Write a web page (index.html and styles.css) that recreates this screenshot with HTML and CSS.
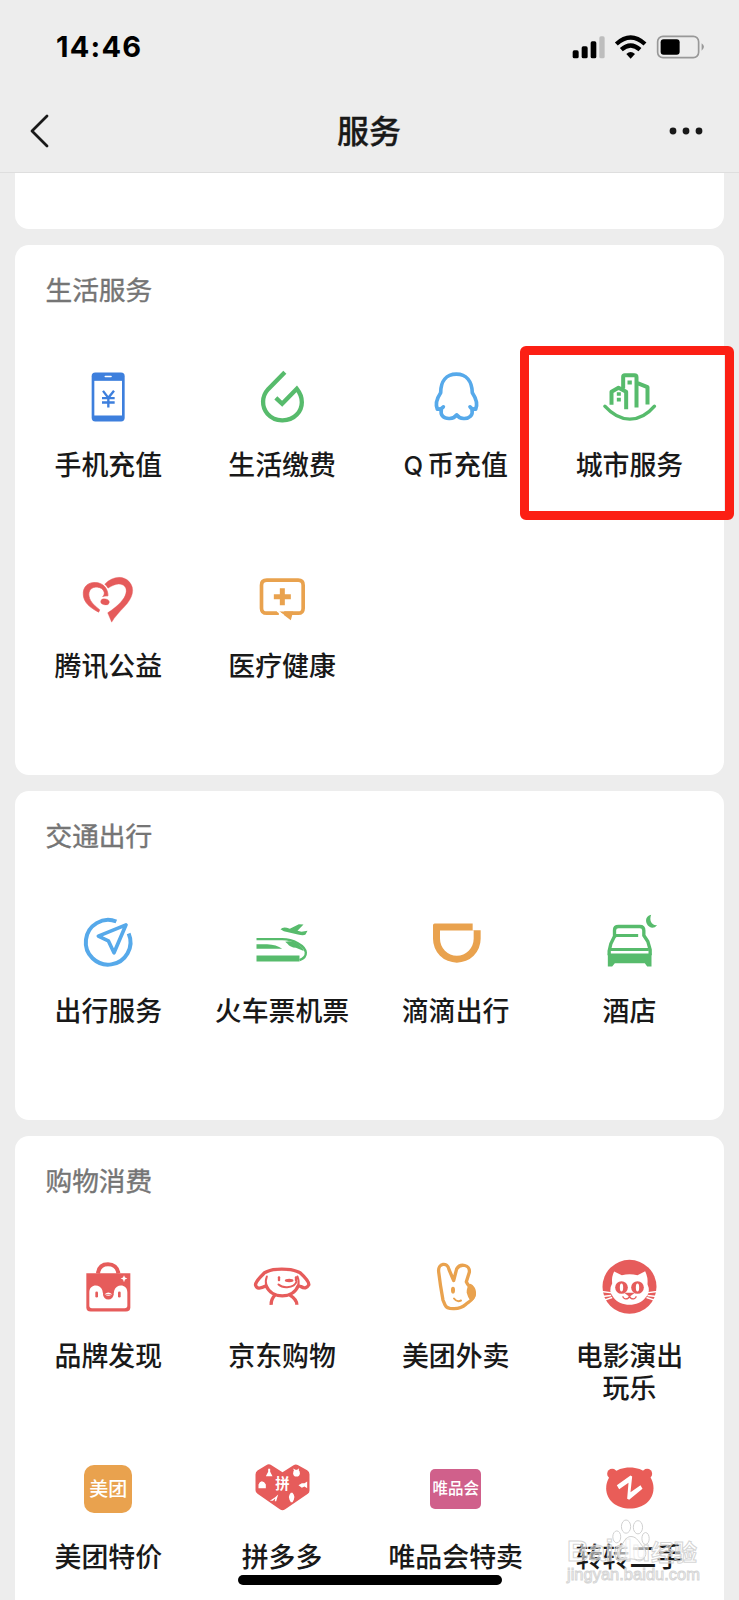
FILE: index.html
```html
<!DOCTYPE html>
<html lang="zh-CN">
<head>
<meta charset="utf-8">
<title>服务</title>
<link rel="stylesheet" href="styles.css">
</head>
<body>
<div class="screen">
  <header class="header">
    <div class="status">
      <span class="time">14:46</span>
      <svg class="status-icons" viewBox="0 0 400 72">
        <g fill="#000"><rect x="2" y="46" width="18" height="24" rx="5"/><rect x="29" y="34" width="18" height="36" rx="5"/><rect x="56" y="19" width="17" height="51" rx="5"/><rect x="82" y="4" width="16" height="66" rx="5" fill="#bdbdbd"/></g>
        <g fill="none" stroke="#000" stroke-width="13"><path d="M133 27Q176-12 219 27M148 44Q176 19 204 44"/></g>
        <path d="M163 57q13-12 26 0l-13 14z"/>
        <rect x="257" y="4" width="123" height="64" rx="16" fill="none" stroke="#989898" stroke-width="5"/>
        <rect x="266" y="13" width="57" height="46" rx="9"/>
        <path d="M389 25q14 10 0 22z" fill="#989898"/>
      </svg>
    </div>
    <div class="nav">
      <svg class="back" viewBox="0 0 20 34"><path d="M18 2L3 17l15 15" fill="none" stroke="#191919" stroke-width="2.8" stroke-linecap="round" stroke-linejoin="round"/></svg>
      <h1 class="nav-title">服务</h1>
      <svg class="more" viewBox="0 0 34 8"><g fill="#191919"><circle cx="4" cy="4" r="3.4"/><circle cx="17" cy="4" r="3.4"/><circle cx="30" cy="4" r="3.4"/></g></svg>
    </div>
  </header>

  <main class="content">
    <section class="card card-cut"></section>

    <section class="card card-life">
      <h2 class="card-title">生活服务</h2>
      <div class="grid">
        <div class="item">
          <svg class="icon" viewBox="116 49.5 180 180"><rect x="157" y="66" width="99" height="147" rx="11" fill="#3d7fdd"/><path d="M165 91h83v104h-83z" fill="#fff"/><path d="M198 78h17" stroke="#fff" stroke-width="5" stroke-linecap="round"/><path d="M191 121l16 21 17-21M207 142v29M188 143h38M188 156h38" fill="none" stroke="#3d7fdd" stroke-width="7"/></svg>
          <span class="label">手机充值</span>
        </div>
        <div class="item">
          <svg class="icon" viewBox="636.5 49.5 180 180"><path d="M735 65L685 116C665 138 665 169 683 190C705 215 748 216 771 192C791 171 791 140 771 115L727 160L708 142" fill="none" stroke="#57bb6c" stroke-width="13"/></svg>
          <span class="label">生活缴费</span>
        </div>
        <div class="item">
          <svg class="icon" viewBox="78 94.5 180 180"><path d="M130 214Q124 222 112 221Q103 201 122 172C122 137 139 116 169 116C199 116 216 137 217 172Q236 201 227 221Q215 222 210 214M124 221C120 240 131 250 149 249Q163 248 170 238Q177 248 191 249C208 250 220 240 216 221" fill="none" stroke="#56a9ea" stroke-width="11" stroke-linecap="round" stroke-linejoin="round"/></svg>
          <span class="label"><span class="latin">Q</span>币充值</span>
        </div>
        <div class="item">
          <svg class="icon" viewBox="598.5 94.5 180 180"><g fill="none" stroke="#57bb6c" stroke-width="12" stroke-linejoin="round"><path d="M636 208V169L657 157L680 169V221M671 159V124Q671 119 676 119H705Q711 119 711 125V216M714 143L744 155V207"/><path d="M616 212Q651 251 691 251Q732 251 765 212" stroke-width="10" stroke-linecap="round"/></g><path d="M684 135h13v12h-13zM652 170h12v11h-12zM652 187h12v11h-12z" fill="#57bb6c"/></svg>
          <span class="label">城市服务</span>
        </div>
        <div class="item">
          <svg class="icon" viewBox="116 22.5 180 180"><g fill="#e55b5b" stroke="#e55b5b" stroke-linejoin="round"><path d="M196 71C220 46 253 44 270 64C288 85 281 112 255 139C239 156 226 170 217 185Q210 169 205 157C218 148 241 133 254 112C265 93 262 79 249 73C234 66 217 77 206 83Q202 75 196 71z"/><path stroke-width="2" d="M178 155C153 142 133 126 132 103C130 80 145 65 168 66C192 67 206 84 206 106Q196 106 190 108C201 100 193 82 175 80C157 78 146 90 149 107C152 125 168 137 181 148z"/><ellipse cx="197" cy="124" rx="13" ry="9" transform="rotate(12 197 124)"/></g></svg>
          <span class="label">腾讯公益</span>
        </div>
        <div class="item">
          <svg class="icon" viewBox="636.5 22.5 180 180"><path d="M717 158H681Q665 158 665 143V74Q665 59 681 59H775Q790 59 790 74V143Q790 158 775 158H733" fill="none" stroke="#e9a24e" stroke-width="11"/><path d="M718 153L753 179L760 153zM720 83h15v18h18v15h-18v18h-15v-18h-18v-15h18z" fill="#e9a24e"/><path d="M712 151l19 14" stroke="#fff" stroke-width="5"/></svg>
          <span class="label">医疗健康</span>
        </div>
      </div>
    </section>

    <section class="card card-travel">
      <h2 class="card-title">交通出行</h2>
      <div class="grid">
        <div class="item">
          <svg class="icon" viewBox="116 37.5 180 180"><g fill="none" stroke="#56a9ea" stroke-width="12"><path d="M231 63A67 67 0 1 0 268 99"/><path d="M260 73L177 107L207 121L224 157Z" stroke-width="11" stroke-linejoin="round"/></g></svg>
          <span class="label">出行服务</span>
        </div>
        <div class="item">
          <svg class="icon" viewBox="636.5 37.5 180 180"><g fill="#57bb6c"><path d="M650 165H779V183H650zM650 131H682Q710 132 727 145H650zM722 86Q729 79 741 82L750 85L777 71L791 72L773 91L785 94L803 91L797 102Q791 107 774 102L732 92z"/><path d="M736 124C748 121 762 122 776 132C788 141 795 151 790 151L768 142Q751 141 743 130z"/></g><path d="M650 116H727C760 116 796 135 798 156Q799 172 779 179" fill="none" stroke="#57bb6c" stroke-width="7"/></svg>
          <span class="label">火车票机票</span>
        </div>
        <div class="item">
          <svg class="icon" viewBox="108 37.5 180 180"><path d="M134 69H248V89H272V115A71 71 0 0 1 129 115V74Q129 69 134 69zM150 90V115A50 50 0 0 0 251 115V90z" fill="#e9a24e" fill-rule="evenodd"/></svg>
          <span class="label">滴滴出行</span>
        </div>
        <div class="item">
          <svg class="icon" viewBox="628.5 37.5 180 180"><g fill="none" stroke="#57bb6c"><path d="M675 112V89Q675 78 687 78H751Q763 78 763 90V105L775 123L782 148V164M675 107L664 130L659 151V164" stroke-width="10"/><path d="M673 105H746" stroke-width="9"/><path d="M664 147H778" stroke-width="9"/></g><path d="M655 159H786V198H773L766 188H676L668 198H655zM785 43C765 47 766 70 780 79Q792 86 803 74C787 76 778 61 785 43z" fill="#57bb6c"/></svg>
          <span class="label">酒店</span>
        </div>
      </div>
    </section>

    <section class="card card-shop">
      <h2 class="card-title">购物消费</h2>
      <div class="grid">
        <div class="item">
          <svg class="icon" viewBox="116 40.5 180 180"><path d="M176 87C178 68 190 59 206 59S235 68 237 87" fill="none" stroke="#e65c5b" stroke-width="12"/><path d="M141 86H273V188Q273 201 260 201H154Q141 201 141 188z" fill="#e65c5b"/><path d="M150 143C150 117 183 117 189 137A18 18 0 0 0 225 137C231 117 264 117 264 143V184Q264 191 256 191H158Q150 191 150 184z" fill="#fff"/><g fill="#e65c5b"><rect x="168" y="141" width="8" height="18" rx="4"/><rect x="236" y="141" width="8" height="18" rx="4"/><circle cx="207" cy="149" r="16"/></g><path d="M196 149Q207 139 218 149Q207 158 196 149z" fill="#fff"/><path d="M198 150h18" stroke="#e65c5b" stroke-width="2"/><path d="M254 92l3 7 7 3-7 3-3 8-3-8-7-3 7-3z" fill="#fff"/></svg>
          <span class="label">品牌发现</span>
        </div>
        <div class="item">
          <svg class="icon" viewBox="636.5 40.5 180 180"><g fill="none" stroke="#e65c5b" stroke-width="10" stroke-linejoin="round" stroke-linecap="round"><path d="M675 84C687 80 687 74 726 74S767 80 780 84C791 94 808 110 807 121Q799 136 783 126L775 124C759 164 696 164 679 124Q651 139 647 121C647 110 664 95 675 84z"/><path d="M681 96Q675 111 680 124M773 96Q779 111 775 124" stroke-width="6"/><path d="M716 120Q726 129 742 128Q766 126 770 111" stroke-width="6"/></g><g fill="none" stroke="#e65c5b" stroke-width="10"><path d="M706 151Q693 164 694 181M749 151Q771 164 771 181"/></g><g fill="#e65c5b"><rect x="714" y="95" width="7" height="15" rx="3"/><rect x="765" y="95" width="7" height="15" rx="3"/><ellipse cx="748" cy="108" rx="13" ry="5"/></g></svg>
          <span class="label">京东购物</span>
        </div>
        <div class="item">
          <svg class="icon" viewBox="108 40.5 180 180"><path d="M240 118C251 120 260 136 258 149C256 164 247 169 241 169Q234 160 230 145Q230 125 240 118z" fill="#e9a24e"/><path d="M159 167C154 140 149 108 146 82C143 55 173 52 177 75L191 108L200 73C211 55 241 61 238 83L229 112C234 125 248 132 253 147C252 167 237 171 227 180C210 195 172 198 165 181Z" fill="none" stroke="#e9a24e" stroke-width="10" stroke-linejoin="round"/><ellipse cx="189" cy="137" rx="6" ry="10" fill="#e9a24e"/><path d="M192 162Q201 174 213 168" fill="none" stroke="#e9a24e" stroke-width="6" stroke-linecap="round"/></svg>
          <span class="label">美团外卖</span>
        </div>
        <div class="item">
          <svg class="icon" viewBox="628.5 39.5 180 180"><circle cx="720" cy="126" r="81" fill="#e65c5b"/><path d="M674 80L697 91Q720 86 744 91L767 79Q776 97 774 118Q785 141 768 158C747 187 693 187 672 158Q655 138 668 116Q665 97 674 80z" fill="#fff"/><path d="M636 140l32 4M638 155l27-3M644 166l24-8M803 140l-32 4M801 155l-27-3M795 166l-24-8" stroke="#fff" stroke-width="4"/><circle cx="696" cy="128" r="19" fill="#e65c5b"/><circle cx="744" cy="128" r="19" fill="#e65c5b"/><ellipse cx="696" cy="128" rx="5" ry="12" fill="#fff"/><ellipse cx="744" cy="128" rx="5" ry="12" fill="#fff"/><path d="M710 146h20l-10 7zM720 148v6q-3 9-13 8-7-2-7-8M720 154q3 9 13 8 7-2 7-8" fill="none" stroke="#e65c5b" stroke-width="4"/></svg>
          <span class="label">电影演出<br>玩乐</span>
        </div>
        <div class="item">
          <div class="icon badge-slot"><span class="badge badge-mt">美团</span></div>
          <span class="label">美团特价</span>
        </div>
        <div class="item">
          <svg class="icon" viewBox="636.5 28.5 180 180"><path d="M687 44Q691 44 695 47L728 68L761 47Q768 43 775 47L802 62Q809 66 809 74V123Q809 130 804 133L735 180Q728 185 721 180L653 133Q647 129 647 122V75Q647 67 653 63L679 47Q683 44 687 44z" fill="#e65c5b"/><text x="728" y="119" text-anchor="middle" class="pin-text">拼</text><g fill="#fff"><path d="M685 58h6v9l7 13h-20l7-13zM656 105q3-9 10-10 8 1 12 10v11h-22zM776 107l10-6h8l8-5v20l-8-5-8 4zM715 135l-6 20h-4l1-8-7 7h-9l16-11zM749 136l4-6h5l4 6q4 8 0 15l-4 7h-5l-4-7q-4-8 0-15z"/><circle cx="770" cy="71" r="10"/><path d="M760 57l10 5 8-6-2 9h-13z"/></g></svg>
          <span class="label">拼多多</span>
        </div>
        <div class="item">
          <div class="icon badge-slot"><span class="badge badge-vip">唯品会</span></div>
          <span class="label">唯品会特卖</span>
        </div>
        <div class="item">
          <svg class="icon" viewBox="688.5 28.5 180 180"><g fill="#e95d58"><circle cx="728" cy="73" r="15"/><circle cx="833" cy="73" r="15"/><path d="M781 54C824 54 852 81 852 116C852 152 821 177 781 177S710 152 710 116C710 81 738 54 781 54z"/></g><path d="M742 107L783 78L788 81L783 128L813 107L819 118L779 151L773 148L777 100L749 119z" fill="#fff"/></svg>
          <span class="label">转转二手</span>
        </div>
      </div>
    </section>
  </main>

  <div class="highlight"></div>
  <div class="watermark">
    <div class="wm-name"><span class="wm-latin">Baidu</span><span class="wm-cn">经验</span></div>
    <div class="wm-url">jingyan.baidu.com</div>
    <svg class="wm-paw" viewBox="0 0 114 130"><g fill="#fff" fill-opacity=".6" stroke="#d0d0d0" stroke-width="3"><ellipse cx="14" cy="54" rx="12" ry="18"/><ellipse cx="42" cy="23" rx="14" ry="20"/><ellipse cx="78" cy="25" rx="14" ry="20"/><ellipse cx="101" cy="59" rx="11" ry="18"/><path d="M57 53C39 53 37 72 24 83C5 100 17 126 37 123Q57 118 77 123C98 127 111 104 95 86C82 73 76 53 57 53z"/></g></svg>
  </div>
  <div class="home-bar"></div>
</div>
</body>
</html>
```
FILE: styles.css
```css
* { box-sizing: border-box; }

body {
  margin: 0;
  background: #ededed;
  font-family: "Noto Sans CJK SC", sans-serif;
}

.screen {
  position: relative;
  height: 1600px;
  overflow: hidden;
}

.header {
  height: 172.5px;
  border-bottom: 1px solid #dedede;
}

.status {
  display: flex;
  justify-content: space-between;
  align-items: center;
  height: 94px;
  padding: 0 34px 0 56px;
}

.time {
  font: 700 29px/32px Inter, sans-serif;
  letter-spacing: 1.2px;
  color: #000;
}

.status-icons {
  width: 133.3px;
  height: 24px;
}

.nav {
  display: flex;
  justify-content: space-between;
  align-items: center;
  height: 73px;
  padding: 0 36px 0 29px;
}

.back { width: 20px; height: 34px; }
.more { width: 34px; height: 8px; }

.nav-title {
  margin: -4px 0 0 20px;
  font-size: 32px;
  line-height: 40px;
  font-weight: 500;
  color: #191919;
  -webkit-text-stroke: 0.3px #191919;
}

.content {
  display: flex;
  flex-direction: column;
  gap: 15.5px;
  padding: 0 15px;
}

.card {
  flex: none;
  padding: 28px 6.5px 0;
  border-radius: 14px;
  background: #fff;
}

.card-cut {
  height: 56.5px;
  padding: 0;
  border-radius: 0 0 14px 14px;
}

.card-life { height: 530.5px; }
.card-travel { height: 329.5px; }
.card-shop { height: 480px; border-radius: 14px 14px 0 0; }

.card-title {
  margin: 0 0 62.2px 24px;
  font-size: 26.7px;
  line-height: 32px;
  font-weight: 400;
  color: #757575;
  -webkit-text-stroke: 0.4px #757575;
}

.grid {
  display: grid;
  grid-template-columns: repeat(4, 173.7px);
  grid-auto-rows: 201px;
}

.item {
  display: flex;
  flex-direction: column;
  align-items: center;
  gap: 21.5px;
}

.icon {
  flex: none;
  width: 60px;
  height: 60px;
}

.label {
  font-size: 26.9px;
  line-height: 32px;
  font-weight: 500;
  text-align: center;
  white-space: nowrap;
  color: #191919;
}

.latin {
  margin-right: 4px;
  font-family: Inter, sans-serif;
  font-size: 25.5px;
}

.badge-slot {
  display: flex;
  align-items: center;
  justify-content: center;
}

.badge {
  display: flex;
  align-items: flex-start;
  justify-content: center;
  color: #fff;
  font-weight: 500;
  white-space: nowrap;
}

.badge-mt {
  width: 48px;
  height: 48px;
  border-radius: 10px;
  background: #e9a24e;
  font-size: 19px;
  line-height: 45px;
}

.badge-vip {
  width: 51px;
  height: 40px;
  border-radius: 5px;
  background: #d0608b;
  font-size: 15.5px;
  line-height: 37px;
}

.pin-text {
  font-size: 43px;
  font-weight: 700;
  fill: #fff;
}

.highlight {
  position: absolute;
  left: 519.5px;
  top: 346px;
  width: 214px;
  height: 173.5px;
  border: 9px solid #fc1f14;
  border-radius: 6px;
}

.home-bar {
  position: absolute;
  left: 238px;
  top: 1575px;
  width: 264px;
  height: 10px;
  border-radius: 5px;
  background: #000;
}

.watermark {
  position: absolute;
  left: 567px;
  top: 1536px;
  width: 134px;
  color: rgba(255, 255, 255, 0.55);
  -webkit-text-stroke: 1px rgba(205, 205, 205, 0.85);
}

.wm-name {
  display: flex;
  align-items: center;
  height: 30px;
}

.wm-latin {
  width: 84px;
  font: 700 30px/30px "Liberation Sans", sans-serif;
}

.wm-cn {
  font-size: 23px;
  line-height: 30px;
  font-weight: 700;
}

.wm-url {
  margin-top: -2px;
  font: 400 16.5px/20px "Liberation Sans", sans-serif;
}

.wm-paw {
  position: absolute;
  left: 45px;
  top: -17px;
  width: 38px;
  height: 43px;
}
```
